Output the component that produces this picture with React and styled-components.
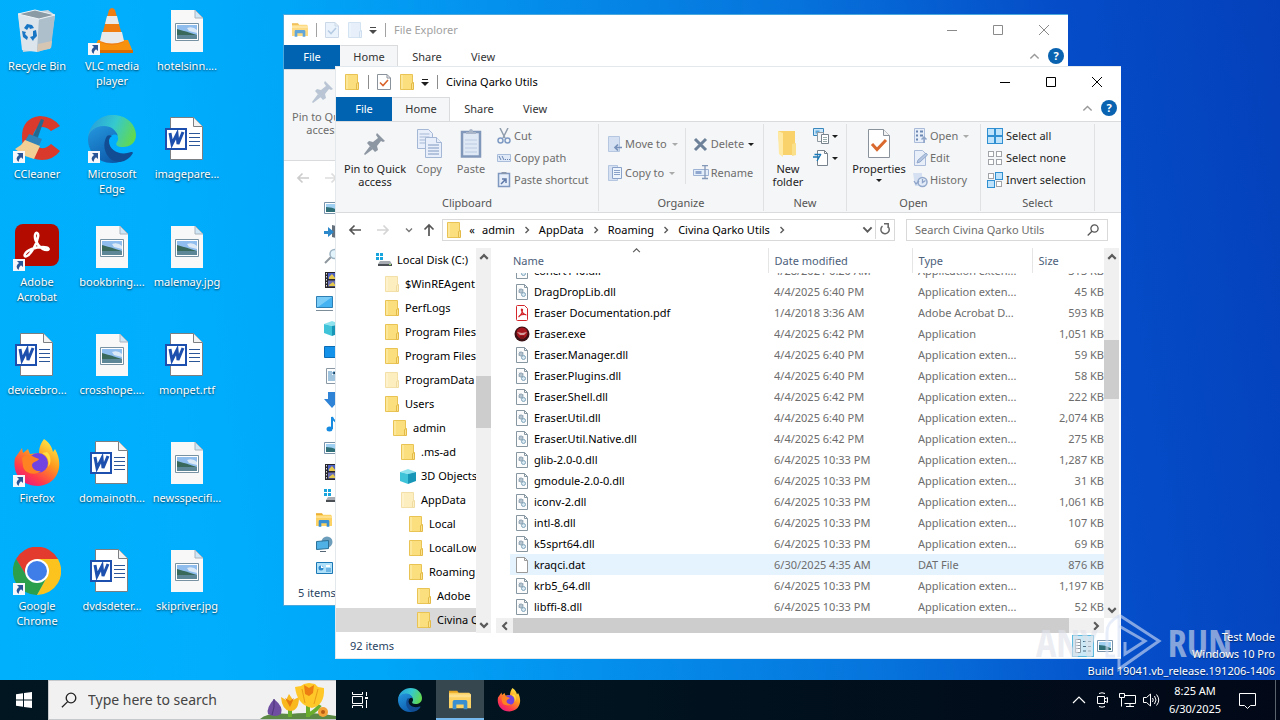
import React from "react";
import styled, { createGlobalStyle } from "styled-components";

const GlobalStyle = createGlobalStyle`
  * {
    box-sizing: border-box;
  }
  body {
    margin: 0;
    overflow: hidden;
    font-family: "Noto Sans", "Open Sans", sans-serif;
    font-size: 11px;
    line-height: 16px;
    color: #000;
  }
  button,
  input {
    font: inherit;
    color: inherit;
    margin: 0;
    padding: 0;
    border: 0;
    background: none;
  }
  svg {
    display: block;
    flex: none;
  }
`;

const Screen = styled.div`
  height: 100vh;
  display: flex;
  flex-direction: column;
`;

const Desktop = styled.main`
  position: relative;
  flex: 1;
  min-height: 0;
  overflow: hidden;
  background: linear-gradient(
    82deg,
    #00b0fc 0%,
    #00aefd 16%,
    #00a6f8 28%,
    #0492ee 42%,
    #0674dc 64%,
    #054cc8 84%,
    #0440ba 100%
  );
`;

const ShortcutGrid = styled.div`
  display: grid;
  grid-auto-flow: column;
  grid-template-rows: repeat(6, 108px);
  grid-auto-columns: 74px;
  column-gap: 1px;
`;

const Shortcut = styled.button`
  display: flex;
  flex-direction: column;
  align-items: center;
  gap: 3px;
  padding-top: 7px;
`;

const ShortcutIcon = styled.span`
  position: relative;
  width: 48px;
  height: 48px;
`;

const ShortcutArrow = styled.span`
  position: absolute;
  left: 0;
  bottom: 0;
`;

const ShortcutLabel = styled.span`
  max-width: 74px;
  line-height: 15px;
  color: #fff;
  text-shadow: 0 1px 2px rgba(0, 0, 0, 0.7);
`;

const WindowFrame = styled.section`
  position: absolute;
  inset: ${(props) => props.$inset};
  display: flex;
  flex-direction: column;
  overflow: hidden;
  background: #fff;
  border: 1px solid ${(props) => (props.$active ? "#e3e8ec" : "#4aa8dc")};
  border-right-width: 0;
`;

const TitleBar = styled.header`
  flex: none;
  height: 30px;
  display: flex;
  align-items: center;
  padding: 0 1px 0 8px;
`;

const TitleTools = styled.div`
  flex: 1;
  display: flex;
  align-items: center;
  gap: 8px;
  opacity: ${(props) => (props.$active ? 1 : 0.8)};
`;

const ToolSeparator = styled.span`
  width: 1px;
  height: 14px;
  background: #8c8c8c;
`;

const ToolButton = styled.button`
  display: grid;
  place-items: center;
  width: ${(props) => props.$width || 14}px;
  height: 22px;
  opacity: ${(props) => (props.$faded ? 0.7 : 1)};
`;

const WindowTitle = styled.span`
  font-size: 11px;
  color: ${(props) => (props.$active ? "#000" : "#8a8a8a")};
`;

const CaptionButton = styled.button`
  width: 46px;
  height: 30px;
  display: grid;
  place-items: center;
  color: ${(props) => (props.$active ? "#000" : "#8a8a8a")};
`;

const TabStrip = styled.nav`
  flex: none;
  height: 24px;
  display: flex;
`;

const Tab = styled.button`
  width: ${(props) => props.$width}px;
  height: 24px;
  padding-bottom: 2px;
  color: #333;
  border: 1px solid transparent;
  border-bottom: 0;
  ${(props) => props.$kind === "file" && "background: #0063b1; color: #fff;"}
  ${(props) =>
    props.$kind === "current" &&
    "background: #f5f6f7; border-color: #dadbdc; border-left-color: #f5f6f7;"}
`;

const TabExtras = styled.div`
  margin-left: auto;
  display: flex;
  align-items: center;
  gap: 8px;
  padding: 0 4px 2px 0;
`;

const HelpButton = styled.button`
  width: 16px;
  height: 16px;
  line-height: 16px;
  border-radius: 50%;
  background: #0a63b0;
  color: #fff;
  font-weight: bold;
`;

const Ribbon = styled.div`
  flex: none;
  height: 92px;
  display: flex;
  padding: 2px 0 1px;
  background: #f5f6f7;
  border-top: 1px solid #dadbdc;
  border-bottom: 1px solid #dadbdc;
`;

const RibbonGroup = styled.div`
  width: ${(props) => props.$width}px;
  display: flex;
  flex-direction: column;
  border-right: 1px solid #e0e1e3;
`;

const GroupItems = styled.div`
  flex: 1;
  display: flex;
  padding: 2px 4px 0 ${(props) => props.$start || 6}px;
`;

const GroupTitle = styled.div`
  text-align: center;
  line-height: 16px;
  color: #555;
`;

const BigButton = styled.button`
  display: flex;
  flex-direction: column;
  align-items: center;
  justify-content: flex-start;
  gap: 4px;
  height: 66px;
  padding-top: 3px;
  width: ${(props) => props.$width}px;
  line-height: 13px;
  color: ${(props) => (props.$off ? "#6d6d6d" : "#1e1e1e")};
`;

const BigLabel = styled.span`
  white-space: pre-line;
`;

const SmallColumn = styled.div`
  display: flex;
  flex-direction: column;
  padding-top: ${(props) => props.$top || 0}px;
  padding-left: ${(props) => props.$left || 0}px;
  gap: ${(props) => props.$gap || 6}px;
`;

const SmallButton = styled.button`
  display: flex;
  align-items: center;
  gap: ${(props) => props.$gap || 2}px;
  height: 16px;
  white-space: nowrap;
  color: ${(props) => (props.$off ? "#6d6d6d" : "#1e1e1e")};
`;

const DropSpot = styled.span`
  padding-left: ${(props) => props.$space || 0}px;
`;

const InnerDivider = styled.span`
  width: 1px;
  height: 56px;
  margin: 2px 7px 0;
  background: #e0e1e3;
`;

const NavRow = styled.div`
  flex: none;
  height: 35px;
  display: flex;
  align-items: center;
  padding: 0 13px 2px 11px;
`;

const NavButton = styled.button`
  width: ${(props) => props.$width}px;
  height: 22px;
  display: grid;
  place-items: center;
`;

const AddressBox = styled.div`
  flex: 1;
  min-width: 0;
  height: 22px;
  display: flex;
  align-items: center;
  border: 1px solid #d9d9d9;
  padding-left: 3px;
`;

const Crumb = styled.button`
  display: flex;
  align-items: center;
  height: 20px;
`;

const CrumbArrow = styled.span`
  width: ${(props) => props.$width || 24}px;
  display: grid;
  place-items: center;
`;

const AddressEnd = styled.div`
  margin-left: auto;
  display: flex;
`;

const RefreshButton = styled(NavButton)`
  height: 20px;
  border-left: 1px solid #d9d9d9;
`;

const SearchField = styled.label`
  width: 202px;
  height: 22px;
  display: flex;
  align-items: center;
  margin-left: 11px;
  padding: 0 8px;
  border: 1px solid #d9d9d9;

  input {
    flex: 1;
    min-width: 0;
    outline: none;
  }
  input::placeholder {
    color: #6d6d6d;
    opacity: 1;
  }
`;

const Panes = styled.div`
  flex: 1;
  min-height: 0;
  display: flex;
`;

const Tree = styled.ul`
  flex: none;
  width: 140px;
  margin: 0;
  padding: 0;
  list-style: none;
  overflow: hidden;
`;

const TreeItem = styled.li`
  height: 24px;
  display: flex;
  align-items: center;
  gap: 5px;
  padding-left: ${(props) => props.$depth * 8 + props.$base}px;
  white-space: nowrap;
  background: ${(props) => (props.$selected ? "#d9d9d9" : "transparent")};
`;

const Scroller = styled.div`
  flex: none;
  display: flex;
  flex-direction: ${(props) => (props.$across ? "row" : "column")};
  ${(props) => (props.$across ? "height: 15px; margin-right: 15px;" : "width: 15px;")}
  background: #f0f0f0;
`;

const ScrollArrow = styled.button`
  flex: none;
  width: ${(props) => (props.$across ? 17 : 15)}px;
  height: ${(props) => (props.$across ? 15 : 17)}px;
  display: grid;
  place-items: center;
`;

const ScrollSpace = styled.span`
  flex: ${(props) => props.$share} 1 0;
`;

const ScrollThumb = styled(ScrollSpace)`
  background: #cdcdcd;
`;

const ListPane = styled.div`
  flex: 1;
  min-width: 0;
  display: flex;
  flex-direction: column;
  margin: 0 2px 0 5px;
`;

const ListArea = styled.div`
  flex: 1;
  min-height: 0;
  display: flex;
`;

const TableView = styled.div`
  flex: 1;
  min-width: 0;
  overflow: hidden;
  padding-left: 14px;
`;

const FileTable = styled.table`
  width: 100%;
  table-layout: fixed;
  border-collapse: collapse;
`;

const HeadCell = styled.th`
  position: relative;
  width: ${(props) => (props.$width ? `${props.$width}px` : "auto")};
  height: 25px;
  padding: 0 0 0 ${(props) => props.$pad}px;
  border-right: ${(props) => (props.$last ? "0" : "1px solid #e5e5e5")};
  text-align: left;
  font-weight: normal;
  color: #4c607a;
`;

const SortMark = styled.span`
  position: absolute;
  top: -2px;
  left: 50%;
  margin-left: -7px;
`;

const FileRow = styled.tr`
  background: ${(props) => (props.$hover ? "#e5f3ff" : "transparent")};
`;

const Cell = styled.td`
  padding: 0 0 0 ${(props) => (props.$main ? 4 : 6)}px;
  color: ${(props) => (props.$main ? "#000" : "#6d6d6d")};
  white-space: nowrap;
`;

const CellBody = styled.div`
  display: flex;
  align-items: ${(props) => (props.$clipped ? "flex-end" : "center")};
  justify-content: ${(props) => (props.$right ? "flex-end" : "flex-start")};
  gap: 4px;
  height: ${(props) => (props.$clipped ? 8 : 21)}px;
  padding-bottom: ${(props) => (props.$clipped ? 2 : 0)}px;
  overflow: hidden;
`;

const StatusBar = styled.footer`
  flex: none;
  height: 25px;
  display: flex;
  align-items: center;
  padding: 1px 5px 0 14px;
  color: #28435f;
`;

const ViewButton = styled.button`
  width: 22px;
  height: 22px;
  display: grid;
  place-items: center;
  border: 1px solid ${(props) => (props.$on ? "#5cb8dc" : "transparent")};
  background: ${(props) => (props.$on ? "#cbe8f6" : "transparent")};
`;

const StatusText = styled.span`
  flex: 1;
`;

const Watermark = styled.div`
  position: absolute;
  right: 48px;
  bottom: 8px;
  display: flex;
  align-items: center;
  gap: 6px;
  font-family: "Liberation Sans Narrow", "Open Sans Condensed", "Roboto Condensed", Roboto, sans-serif;
  font-size: 38px;
  line-height: 60px;
  color: rgba(222, 226, 234, 0.6);
  pointer-events: none;
`;

const BuildInfo = styled.div`
  position: absolute;
  right: 5px;
  bottom: 1px;
  text-align: right;
  line-height: 17px;
  color: #fff;
  text-shadow: 0 1px 1px rgba(0, 0, 0, 0.5);
`;

const Taskbar = styled.footer`
  flex: none;
  height: 40px;
  display: flex;
  background: linear-gradient(90deg, #011620, #01131f 50%, #020817);
  color: #fff;
`;

const TaskButton = styled.button`
  width: ${(props) => props.$width || 48}px;
  height: 40px;
  display: grid;
  place-items: center;
  ${(props) =>
    props.$open && "background: #37474f; border-bottom: 2px solid #76b9ed; padding-top: 2px;"}
`;

const TaskSearch = styled.label`
  width: 288px;
  height: 40px;
  display: flex;
  align-items: center;
  padding-left: 12px;
  background: #f1f1f1;
  border: 1px solid #c5c9cc;
  border-right: 0;

  input {
    flex: 1;
    min-width: 0;
    margin-left: 11px;
    padding-bottom: 1px;
    font-size: 14px;
    line-height: 20px;
    outline: none;
  }
  input::placeholder {
    color: #444;
    opacity: 1;
  }
`;

const Tray = styled.div`
  margin-left: auto;
  display: flex;
  align-items: center;
`;

const Clock = styled.button`
  width: 64px;
  text-align: center;
  line-height: 18px;
`;

const PeekButton = styled.button`
  width: 5px;
  height: 40px;
  margin-left: 8px;
  border-left: 1px solid #5b636d;
`;

/* small drawings */

const Chevron = ({ dir = "down", size = 8, color = "#5a5a5a", weight = 1.4 }) => {
  const turns = { down: 0, left: 90, up: 180, right: 270 };
  return (
    <svg width={size} height={size} viewBox="0 0 8 8">
      <path
        d="M1 2.500l3 3 3-3"
        fill="none"
        stroke={color}
        strokeWidth={weight}
        transform={`rotate(${turns[dir]} 4 4)`}
      />
    </svg>
  );
};

const DropMark = ({ color = "#1e1e1e", space }) => (
  <DropSpot $space={space}>
    <svg width="6" height="3" viewBox="0 0 6 3">
      <path d="M0 0h6L3 3z" fill={color} />
    </svg>
  </DropSpot>
);

const ToolbarMark = () => (
  <svg width="8" height="8" viewBox="0 0 8 8">
    <path d="M1 1h6v1H1zM0 4h8L4 8z" fill="#1e1e1e" />
  </svg>
);

const Folder = ({ pale, blue }) => (
  <svg width="16" height="16" viewBox="0 0 16 16" opacity={pale ? 0.5 : 1}>
    <path d="M1.500.5h12v15h-12z" fill={blue ? "#d3e5f8" : "#fbdf7f"} stroke={blue ? "#b4cfe9" : "#e9c354"} />
    <path d="M12.500 9.500l2-1v7h-2z" fill={blue ? "#dbeafa" : "#fbe28c"} stroke={blue ? "#a9c6e3" : "#e3ba48"} />
    <path d="M3 1v14" stroke={blue ? "#e9f3fd" : "#fdeeb4"} />
  </svg>
);

const BigFolder = () => (
  <svg width="22" height="29" viewBox="0 0 22 29">
    <path d="M1 2h17v24H3z" fill="#f9d26b" />
    <path d="M1 2l5 2v24l-4-3z" fill="#ffe9a3" />
    <path d="M15 15l4-1v12l-4 1z" fill="#fbe08c" />
  </svg>
);

const ExplorerIcon = ({ size = 16 }) => (
  <svg width={size} height={size} viewBox="0 0 24 24">
    <path d="M0 2h9l2 3H0z" fill="#e8a723" />
    <path d="M0 4h22l2 2v15H0z" fill="#fdd264" />
    <path d="M0 6h24v3H0z" fill="#fee08c" />
    <path d="M4 22v-8q0-2 2-2h12q2 0 2 2v8h-4v-5H8v5z" fill="#3a8fd0" />
  </svg>
);

const CheckPage = ({ blue }) => (
  <svg width="14" height="16" viewBox="0 0 14 16">
    <path d="M.5.5h9.500l3.500 3.500v11.500H.5z" fill={blue ? "#dceafa" : "#fff"} stroke={blue ? "#a3bcd8" : "#8a929b"} />
    <path d="M10 .5V4h3.500" fill="none" stroke={blue ? "#a3bcd8" : "#8a929b"} />
    <path d="M3 8.500l3 3 5-5.500" fill="none" stroke={blue ? "#7ea6cf" : "#d9622b"} strokeWidth="1.600" />
  </svg>
);

const PropertiesIcon = () => (
  <svg width="22" height="29" viewBox="0 0 22 29">
    <path d="M.5.5h15l6 6v22H.5z" fill="#fff" stroke="#8a929b" />
    <path d="M15.500.5v6h6" fill="#f2f2f2" stroke="#8a929b" />
    <path d="M4 15l5 5.500L18 11" fill="none" stroke="#d9692e" strokeWidth="3" />
  </svg>
);

const PinIcon = ({ faded }) => (
  <svg width="26" height="29" viewBox="0 0 26 29">
    <g fill={faded ? "#b9c5d4" : "#8d97a3"}>
      <path d="M15 4l8 8-2 1-2-1-4 5 1 4-3 2-8-9 2-2 4 1 5-4-2-3z" />
      <path d="M8 17l3 3-8 6-1-1z" />
    </g>
  </svg>
);

const CopyIcon = () => (
  <svg width="26" height="29" viewBox="0 0 26 29">
    <g stroke="#a4b7d5" fill="#e8effa">
      <path d="M1.500.5h11l4 4v15h-15z" />
      <path d="M3.500 5h10M3.500 8h10M3.500 11h10M3.500 14h10" />
      <path d="M9.500 8.500h11l5 5v15h-16z" />
      <path d="M20.500 8.500v5h5" />
      <path d="M12 16h11M12 19h11M12 22h11M12 25h11" stroke="#7f98bf" />
    </g>
  </svg>
);

const PasteIcon = () => (
  <svg width="22" height="29" viewBox="0 0 22 29">
    <path d="M2 3h18v24.500H2z" fill="#dfe8f5" stroke="#8298bb" strokeWidth="2.500" />
    <path d="M6 5V3h3q0-3 2-3t2 3h3v2z" fill="#a9b6c9" />
    <path d="M5 11h12M5 15h12M5 19h12M5 23h12" stroke="#bccbe2" />
  </svg>
);

const CutIcon = () => (
  <svg width="16" height="16" viewBox="0 0 16 16" fill="none">
    <path d="M4 0l5 10M12 0L7 10" stroke="#8f9dae" strokeWidth="1.500" />
    <circle cx="4.500" cy="12.500" r="2.500" stroke="#7f9bc4" strokeWidth="1.500" />
    <circle cx="11.500" cy="12.500" r="2.500" stroke="#7f9bc4" strokeWidth="1.500" />
  </svg>
);

const CopyPathIcon = () => (
  <svg width="16" height="16" viewBox="0 0 16 16">
    <path d="M1.500 4.500h13v7h-13z" fill="#dfe9f8" stroke="#a9bddb" />
    <path d="M3 6l2 4M6 6l2 4M9 9.500h1M11 9.500h1M13 9.500h1" stroke="#6681b0" />
  </svg>
);

const PasteLinkIcon = () => (
  <svg width="16" height="16" viewBox="0 0 16 16">
    <path d="M2.500 1.500h11v13h-11z" fill="#e6eefa" stroke="#7f98bf" strokeWidth="1.500" />
    <path d="M5.500 0h5v2h-5z" fill="#8a98ad" />
    <path d="M5 12l4-4M6 7h4v4" fill="none" stroke="#5c77a6" strokeWidth="1.500" />
  </svg>
);

const MoveToIcon = () => (
  <svg width="15" height="16" viewBox="0 0 15 16">
    <path d="M.5.5h11v15H.5z" fill="#d5e1f2" stroke="#b5c6e0" />
    <path d="M14 11.500H7M10 8.500l-3 3 3 3" fill="none" stroke="#7891ba" strokeWidth="1.700" />
  </svg>
);

const CopyToIcon = () => (
  <svg width="15" height="16" viewBox="0 0 15 16">
    <path d="M.5.5h9v15h-9z" fill="#d5e1f2" stroke="#b5c6e0" />
    <path d="M4.500 2.500h9v11h-9z" fill="#eef4fc" stroke="#8ba2c8" />
    <path d="M6 5.500h6M6 7.500h6M6 9.500h6" stroke="#8ba2c8" />
  </svg>
);

const DeleteIcon = () => (
  <svg width="15" height="15" viewBox="0 0 15 15">
    <path d="M2 2l11 11M13 2L2 13" stroke="#6d8199" strokeWidth="3" />
  </svg>
);

const RenameIcon = () => (
  <svg width="17" height="16" viewBox="0 0 17 16">
    <path d="M.5 4.500h15v6H.5z" fill="#e4edfa" stroke="#9eb3d4" />
    <path d="M2.500 6h6v3h-6z" fill="#8fa7ce" />
    <path d="M9 .5h6M12 .5v13M9 13.500h6" stroke="#8498b8" strokeWidth="1.300" />
  </svg>
);

const NewItemIcon = () => (
  <svg width="17" height="16" viewBox="0 0 17 16">
    <path d="M.5.5h10v7H.5z" fill="#cbe6f8" stroke="#3a87bd" />
    <path d="M2.500 2.500h4v3h-4z" fill="#5aa7d8" />
    <path d="M4.500 4.500h6v9h-6z" fill="#f7f7f7" stroke="#8f979f" />
    <path d="M8.500 6.500h7v9h-7z" fill="#fff" stroke="#78828c" />
    <path d="M10 9.500h4M10 11.500h4M10 13.500h4" stroke="#9aa" />
  </svg>
);

const EasyAccessIcon = () => (
  <svg width="17" height="16" viewBox="0 0 17 16">
    <path d="M4.500.5h7l3 3v12h-10z" fill="#fff" stroke="#78828c" />
    <path d="M11.500.5v3h3" fill="none" stroke="#78828c" />
    <path d="M0 7h6M1.500 4.500H8M4 11l4-7" stroke="#1979b8" strokeWidth="1.300" />
  </svg>
);

const OpenIcon = () => (
  <svg width="15" height="16" viewBox="0 0 15 16">
    <path d="M1.500.5h10v14h-10z" fill="#e8eff9" stroke="#a9bbd8" />
    <path d="M3 3.500h2M3 7.500h2M3 11.500h2M7 3.500h3M7 7.500h3" stroke="#6d87b3" strokeWidth="2" />
    <path d="M11 15V9M8.500 11.500L11 9l2.500 2.500" fill="none" stroke="#8da3c8" strokeWidth="1.500" />
  </svg>
);

const EditIcon = () => (
  <svg width="15" height="16" viewBox="0 0 15 16">
    <path d="M1.500.5h8l3 3v12h-11z" fill="#e8eff9" stroke="#a9bbd8" />
    <path d="M4 13l1-3 8-7 1.500 2-7.500 7z" fill="#b3c5e0" stroke="#93a9cb" />
  </svg>
);

const HistoryIcon = () => (
  <svg width="15" height="16" viewBox="1 0 15 16">
    <path d="M1 1h9v13H3z" fill="#d5e1f2" />
    <circle cx="10.500" cy="10" r="4.500" fill="#e2ebf7" stroke="#93a9cb" strokeWidth="1.500" />
    <path d="M10.500 7v3.500l3-2M2 9l2 3 3-3" fill="none" stroke="#8da3c8" strokeWidth="1.300" />
  </svg>
);

const SelectIcon = ({ filled }) => (
  <svg width="16" height="16" viewBox="0 0 16 16">
    {[
      [1, 1],
      [9, 1],
      [1, 9],
      [9, 9],
    ].map(([x, y], idx) =>
      filled.includes(idx) ? (
        <rect key={idx} x={x - 0.5} y={y - 0.5} width="7" height="7" fill="#bfe3fa" stroke="#2f8fd0" />
      ) : (
        <rect key={idx} x={x + 0.5} y={y + 0.5} width="5" height="5" fill="#fff" stroke="#a0a4a8" />
      )
    )}
  </svg>
);

const NavArrow = ({ dir, color }) => {
  const turns = { left: 0, up: 90, right: 180 };
  return (
    <svg width="14" height="14" viewBox="0 0 14 14">
      <path
        d="M13 7H2M6.500 2.500L2 7l4.500 4.500"
        fill="none"
        stroke={color}
        strokeWidth="1.700"
        transform={`rotate(${turns[dir]} 7 7)`}
      />
    </svg>
  );
};

const RefreshIcon = () => (
  <svg width="12" height="12" viewBox="0 0 12 12">
    <path d="M9 3.500A4.200 4.200 0 1 1 3.500 3.200" fill="none" stroke="#666" strokeWidth="1.500" />
    <path d="M5 .8h4.200V5" fill="none" stroke="#666" strokeWidth="1.500" />
  </svg>
);

const SearchIcon = ({ size = 12, color = "#555", weight = 1.3 }) => (
  <svg width={size} height={size} viewBox="0 0 12 12" fill="none" stroke={color} strokeWidth={weight}>
    <circle cx="7.500" cy="4.500" r="3.600" />
    <path d="M5 7.200L.7 11.500" />
  </svg>
);

const DriveIcon = () => (
  <svg width="16" height="16" viewBox="0 0 16 16">
    <path d="M0 1h3v3H0zM4 1h3v3H4zM0 5h3v3H0zM4 5h3v3H4z" fill="#18a4dc" />
    <path d="M4 9h10l2 3H2z" fill="#a7adb2" />
    <path d="M2 12h14v2H2z" fill="#4a4f55" />
    <path d="M13 12h2v1h-2z" fill="#9fe870" />
  </svg>
);

const CubeIcon = () => (
  <svg width="16" height="16" viewBox="0 0 16 16">
    <path d="M0 4l8-3 8 3-8 2z" fill="#8fe3ee" />
    <path d="M0 4l8 2v10l-8-3z" fill="#3fc3d8" />
    <path d="M16 4L8 6v10l8-3z" fill="#1796b8" />
  </svg>
);

const PictureIcon = () => (
  <svg width="16" height="16" viewBox="0 0 16 16">
    <path d="M.5 2.500h15v11H.5z" fill="#fff" stroke="#7893aa" />
    <path d="M2 4h12v5H2z" fill="#9fd0f2" />
    <path d="M2 7q6 0 12 3v2H2z" fill="#2f6f78" />
  </svg>
);

const FilmIcon = () => (
  <svg width="16" height="16" viewBox="0 0 16 16">
    <path d="M1 0h14v16H1z" fill="#26262c" />
    <path d="M2.500 1v14M13.500 1v14" stroke="#ddd" strokeDasharray="1.500 1.500" />
    <path d="M4 1h8v6H4z" fill="#4b5fc4" />
    <path d="M4 8.500h8v6H4z" fill="#6b6fb4" />
    <path d="M5 5l3-3 4 5H5zM5 13l4-3 3 4H5z" fill="#e5c94f" />
  </svg>
);

const MonitorIcon = () => (
  <svg width="17" height="16" viewBox="0 0 17 16">
    <path d="M.5.5h16v11H.5z" fill="#45b2f2" stroke="#2d7fb4" />
    <path d="M1 1h15L2 11H1z" fill="#7bcdf8" />
    <path d="M0 14.500h17" stroke="#7c8c99" />
  </svg>
);

const DesktopIcon = () => (
  <svg width="16" height="16" viewBox="0 0 16 16">
    <path d="M.5 2.500h15v11H.5z" fill="#1492ea" stroke="#0b6cb5" />
  </svg>
);

const DocumentIcon = () => (
  <svg width="16" height="16" viewBox="0 0 16 16">
    <path d="M2.500.5h11v15h-11z" fill="#fff" stroke="#8a98a5" />
    <path d="M4 4h4M4 6h4M4 8h8M4 10h8M4 12h8M9 4h3v2H9z" stroke="#4288bd" />
  </svg>
);

const DownloadIcon = () => (
  <svg width="16" height="16" viewBox="0 0 16 16">
    <path d="M4 0h7v7h5l-8 9-8-9h4z" fill="#2f83d6" />
  </svg>
);

const MusicIcon = () => (
  <svg width="16" height="16" viewBox="0 0 16 16">
    <ellipse cx="5.500" cy="13" rx="3" ry="2.500" fill="#178be0" />
    <path d="M8 13V1q1 3 4 5" fill="none" stroke="#178be0" strokeWidth="2" />
  </svg>
);

const MagnifierIcon = () => (
  <svg width="16" height="16" viewBox="0 0 16 16">
    <path d="M1 15l6-6" stroke="#8d969e" strokeWidth="2" />
    <circle cx="10.500" cy="6" r="4.500" fill="#e2f3fc" stroke="#9db4c4" strokeWidth="1.500" />
  </svg>
);

const DeviceIcon = () => (
  <svg width="16" height="16" viewBox="0 0 16 16">
    <path d="M8 1l8 2v12l-8-2z" fill="#64717c" />
    <path d="M0 7h4V3l6 5-6 5v-3H0z" fill="#2d88ca" />
  </svg>
);

const NetworkIcon = () => (
  <svg width="17" height="16" viewBox="0 0 17 16">
    <circle cx="11" cy="6" r="5.500" fill="#6c9dba" />
    <path d="M.5 5.500l12-1v8l-12 1z" fill="#4fb1e6" stroke="#2b7198" />
    <path d="M4 15.500h6" stroke="#567" />
  </svg>
);

const PanelIcon = () => (
  <svg width="17" height="16" viewBox="0 0 17 16">
    <path d="M.5 2.500h16v11H.5z" fill="#aee0fa" stroke="#1c77b5" />
    <circle cx="5" cy="8" r="2.500" fill="#2f8bcf" />
    <path d="M5 8V5l3 3zM10 5h4v2h-4z" fill="#fff" />
    <path d="M10 9h5M10 11h5" stroke="#2f8bcf" />
  </svg>
);

const DllIcon = () => (
  <svg width="16" height="16" viewBox="0 0 16 16">
    <path d="M2.500.5h8l3 3v12h-11z" fill="#fcfcfc" stroke="#8797a2" />
    <path d="M10.500.5v3h3" fill="none" stroke="#8797a2" />
    <circle cx="7" cy="7" r="2" fill="#e3edf2" stroke="#8097a8" />
    <circle cx="9.500" cy="10.500" r="2" fill="#dcebf3" stroke="#7fa5bb" />
    <path d="M5 4.500l4 5M4.500 8.500l5-3" stroke="#8097a8" strokeWidth="0.500" />
  </svg>
);

const BlankIcon = () => (
  <svg width="16" height="16" viewBox="0 0 16 16">
    <path d="M2.500.5h8l3 3v12h-11z" fill="#fff" stroke="#9a9a9a" />
    <path d="M10.500.5v3h3" fill="none" stroke="#9a9a9a" />
  </svg>
);

const PdfIcon = () => (
  <svg width="16" height="16" viewBox="0 0 16 16">
    <path d="M3.500.5h7l3 3v11q0 1-1 1h-9q-1 0-1-1v-13q0-1 1-1z" fill="#fff" stroke="#d4272b" />
    <path
      d="M4.500 12q4-3 4-7.500q-1.500-1-1 1 1.500 4 5 4.500M5 11q3-2 7-1.500"
      fill="none"
      stroke="#d4272b"
      strokeWidth="1.200"
    />
  </svg>
);

const EraserIcon = () => (
  <svg width="16" height="16" viewBox="0 0 16 16">
    <circle cx="8" cy="8" r="7.500" fill="#3c1115" />
    <circle cx="8" cy="7" r="5.500" fill="#a3161d" />
    <path d="M3 6l5 1 5-1-3 3H6z" fill="#d39a9a" />
    <path d="M6 10h4v3H6z" fill="#7b1217" />
  </svg>
);

const DetailsViewIcon = () => (
  <svg width="18" height="14" viewBox="0 0 18 14">
    <path d="M1.500.5h5v13h-5z" fill="#fff" stroke="#8c9aa5" />
    <path d="M1 3.500h6M1 6.500h6M1 9.500h6" stroke="#8c9aa5" />
    <path d="M9 2.500h3M14 2.500h3M9 7.500h3M14 7.500h3M9 12h3M14 12h3" stroke="#4d6b80" />
  </svg>
);

const ArrowBadge = () => (
  <svg width="12" height="12" viewBox="0 0 12 12">
    <path d="M0 0h12v12H0z" fill="#f5f7fa" />
    <path d="M4 2h6v6L8 6.300Q5.500 8 5.500 11 1.500 7.500 6 4z" fill="#2a5596" />
  </svg>
);

const RecycleBin = () => (
  <svg width="48" height="48" viewBox="0 0 48 48">
    <path d="M5 7l30-4 7 5-5 34-27 3z" fill="#c6d3dd" />
    <path d="M5 7l21 5-2 33-15-2z" fill="#dce5ec" />
    <path d="M26 12l16-4-4 33-14 4z" fill="#aebfcc" />
    <path d="M5 7l17-4 20 5-16 4z" fill="#8b9ba6" stroke="#eef4f8" />
    <path d="M24 45l1-8 14-3-1 7z" fill="#d5c6b4" />
    <g fill="#1976c5">
      <path d="M11 21l3-4 5 1 2 3-4 1-1-2-2 3z" />
      <path d="M20 24l3-1 1 6-3 3-1 2-3-4 3-1z" />
      <path d="M9 24l4 1-1 2 3 3-1 3-4-3z" />
    </g>
  </svg>
);

const VlcCone = () => (
  <svg width="48" height="48" viewBox="0 0 48 48">
    <path d="M10 33h30l5 12H4z" fill="#f8920e" />
    <path d="M4 43h41v3H4z" fill="#d96b00" />
    <path d="M21 3q3-4 6 0l9 32q-12 6-24 0z" fill="#f07d10" />
    <path d="M19 9h10l2 8H17zM14 25h20l2 9q-12 5-24 0z" fill="#e7e9ea" />
  </svg>
);

const CCleanerIcon = () => (
  <svg width="48" height="48" viewBox="0 0 48 48">
    <path
      d="M47 11Q39 1 27 1 9 3 9 22q0 22 20 23 11 0 18-9l-9-7q-5 5-10 4-8-2-8-11 1-10 9-10 5 0 9 4z"
      fill="#d93a2b"
    />
    <path d="M28 4l3 1-7 20-5-2z" fill="#27688f" />
    <path d="M16 19l13 5-3 7-14-5z" fill="#2f83b8" />
    <path d="M12 25l15 6-6 13-9-3-10-7 6-4z" fill="#f2cf94" />
  </svg>
);

const EdgeIcon = ({ size = 48 }) => (
  <svg width={size} height={size} viewBox="0 0 48 48">
    <defs>
      <linearGradient id="edgeTop" x1="0" y1="0.3" x2="1" y2="0.6">
        <stop offset="0" stopColor="#289edb" />
        <stop offset="0.500" stopColor="#35c9cf" />
        <stop offset="1" stopColor="#63d94c" />
      </linearGradient>
      <linearGradient id="edgeSide" x1="0" y1="0" x2="0.6" y2="1">
        <stop offset="0" stopColor="#2598df" />
        <stop offset="1" stopColor="#0d5bab" />
      </linearGradient>
    </defs>
    <path
      d="M0 22C2 8 13 0 25 0c14 0 23 10 23 20 0 8-6 12-13 12-6 0-8-2-6-5 2-3 1-5 0-7-3-5-7-8-13-8C9 12 3 16 0 22z"
      fill="url(#edgeTop)"
    />
    <path
      d="M0 24c0-7 7-13 16-13 7 0 12 4 14 10-2-2-5-2-7 0-5 5-4 14 1 19 5 5 11 4 15 3-4 3-9 5-15 5C9 48 0 36 0 24z"
      fill="url(#edgeSide)"
    />
    <path
      d="M19 21c-7 11 1 27 13 26 6-1 10-4 13-9 0-1-1-1-2-1-10 4-22-1-22-11 0-2 1-4 3-5-2-1-4-1-5 0z"
      fill="#124d94"
    />
  </svg>
);

const AcrobatIcon = () => (
  <svg width="48" height="48" viewBox="0 0 48 48">
    <rect x="2" y="1" width="44" height="42" rx="8" fill="#b30b00" />
    <path
      d="M12 31c2-4 10-7 18-7 6 0 7 3 4 3-6 0-13-8-12-15 1-4 4-2 3 2-1 7-7 17-11 19-2 1-3 0-2-2z"
      fill="none"
      stroke="#fff"
      strokeWidth="2.500"
    />
  </svg>
);

const FirefoxIcon = ({ size = 48 }) => (
  <svg width={size} height={size} viewBox="0 0 48 48">
    <defs>
      <linearGradient id="foxFire" x1="0.85" y1="0" x2="0.2" y2="1">
        <stop offset="0" stopColor="#fff14a" />
        <stop offset="0.400" stopColor="#ff9a1f" />
        <stop offset="0.750" stopColor="#ff3b4b" />
        <stop offset="1" stopColor="#e31587" />
      </linearGradient>
    </defs>
    <path
      d="M31 0c7 5 8 9 9 13l2-3c9 15 4 36-17 37C9 47-1 35 2 19L9 9l1 5 5-4 2 5 9-1c0-6 2-10 5-14z"
      fill="url(#foxFire)"
    />
    <circle cx="25" cy="24" r="10" fill="#7143e0" />
    <path d="M9 19c4-4 9-3 12-1l5 2c-2 3-6 2-7 6 0 4 5 7 9 6-5 5-17 3-18-5z" fill="#ff8222" />
    <path d="M29 14c5 2 8 8 6 14 4-4 3-12-1-15z" fill="#fd4" />
  </svg>
);

const ChromeIcon = () => (
  <svg width="48" height="48" viewBox="0 0 48 48">
    <path d="M3 12A24 24 0 0 1 45 12H24L14 30z" fill="#e33b2e" />
    <path d="M3 12A24 24 0 0 0 24 48L34 30H14z" fill="#2b9f4b" />
    <path d="M45 12A24 24 0 0 1 24 48L34 30 24 12z" fill="#fcc31e" />
    <circle cx="24" cy="24" r="12" fill="#fff" />
    <circle cx="24" cy="24" r="10" fill="#3f7de8" />
  </svg>
);

const WordFile = () => (
  <svg width="48" height="48" viewBox="0 0 48 48">
    <path d="M7.500 2.500h23l9 9v33h-32z" fill="#fff" stroke="#7c7f82" />
    <path d="M30.500 2.500v9h9" fill="#f2f2f2" stroke="#7c7f82" />
    <path d="M26 18.500h11M26 22.500h11M26 26.500h11M26 30.500h11" stroke="#2b579a" />
    <path d="M3 14h20v20H3z" fill="#fff" stroke="#1d4fae" strokeWidth="2" />
    <path d="M7 18l2 11 5-10 1 10 5-12" fill="none" stroke="#1d4fae" strokeWidth="3" />
  </svg>
);

const ImageFile = () => (
  <svg width="48" height="48" viewBox="0 0 48 48">
    <path d="M8 3h24l8 8v34H8z" fill="#f8f8f8" />
    <path d="M32 3v8h8z" fill="#cfe6f6" stroke="#a8b4bd" />
    <path d="M12.500 16.500h23v17h-23z" fill="#fff" stroke="#7793a3" />
    <path d="M14 18h20v14H14z" fill="#8fbdee" />
    <path d="M14 22q8 2 20 6v1H14z" fill="#39695a" />
    <path d="M14 28h20v4H14z" fill="#5d8797" />
    <path d="M24 21q6-2 10 2v3l-8-2z" fill="#dbe9f7" />
  </svg>
);

const TulipPicture = () => (
  <svg width="78" height="38" viewBox="0 0 78 38">
    <path d="M2 38q8-7 30-5 20-3 46 2v3z" fill="#5c8a45" />
    <path d="M32 36V24M50 36V20M50 34q8-4 12-10" stroke="#6bae2e" strokeWidth="4" fill="none" />
    <path d="M16 18q10 8 7 15-6 4-13 0-2-6 6-15z" fill="#6f4da0" />
    <path d="M16 18q1 8-2 16" stroke="#4d3479" fill="none" />
    <path d="M23 16l5 3 3-6 4 6 6-3q0 14-9 14-8-1-9-14z" fill="#f9b81d" />
    <path d="M27 17l5 3 4-3-4 9z" fill="#e67a12" />
    <path d="M37 6l6-1 3-2 5-1 6 1 3 3 6 1q1 17-12 20-15-3-17-21z" fill="#ffc728" />
    <path d="M46 4l5 3 5-3-1 8-4 3-4-2z" fill="#ec7e12" />
    <path d="M44 8l3 14M60 8l-4 15" stroke="#e99a17" fill="none" />
    <circle cx="65" cy="31" r="5" fill="#f4a338" />
    <circle cx="65" cy="31" r="2" fill="#b85c15" />
  </svg>
);

const StartIcon = () => (
  <svg width="16" height="16" viewBox="0 0 16 16">
    <path d="M0 2.200L7 1.200V7.500H0zM8 1l8-1v7.500H8zM0 8.500h7v6.300l-7-1zM8 8.500h8V16l-8-1z" fill="#fff" />
  </svg>
);

const TaskViewIcon = () => (
  <svg width="16" height="16" viewBox="0 0 16 16" fill="none" stroke="#fff">
    <path d="M.5 4.500h10v7H.5zM.5 0v2.500h10V0M.5 16v-2.500h10V16M14.500 0v4M14.500 8v8" />
    <path d="M13 5h3v2h-3z" fill="#fff" stroke="none" />
  </svg>
);

const CameraTrayIcon = () => (
  <svg width="14" height="16" viewBox="0 0 14 16" fill="none" stroke="#fff">
    <path d="M1.500 4.500h7v7h-7zM8.500 7l3-1.500v5L8.500 9M3 1.500q3-1.500 6 0M3 14.500q3 1.500 6 0" />
  </svg>
);

const WiredTrayIcon = () => (
  <svg width="17" height="16" viewBox="0 0 17 16" fill="none" stroke="#fff">
    <path d="M5.500 3.500h11v8h-11M11 11.500v3M7 14.500h8M.5 1.500h5v4h-5zM2.500 5.500v9" />
  </svg>
);

const SoundTrayIcon = () => (
  <svg width="17" height="16" viewBox="0 0 17 16" fill="none" stroke="#fff">
    <path d="M.5 5.500h3l4-3.500v12l-4-3.500h-3zM9.500 6q1.500 2 0 4M11.500 4q3 4 0 8M13.500 2.500q4.500 5.500 0 11" />
  </svg>
);

const NoteTrayIcon = () => (
  <svg width="17" height="17" viewBox="0 0 17 17" fill="none" stroke="#fff">
    <path d="M.5 1.500h16v12h-5l-3 3-3-3h-5z" />
  </svg>
);

const PlayMark = () => (
  <svg width="58" height="60" viewBox="0 0 58 60" fill="none" stroke="rgba(215,225,245,0.6)">
    <path d="M15 3l40 26-40 28V46M15 3v42" strokeWidth="3" />
    <path d="M15 14l26 15-20 13V30" strokeWidth="3" />
    <path d="M15 4Q3 10 3 20v24h8" strokeWidth="3" />
  </svg>
);

/* data */

const shortcuts = [
  { label: "Recycle Bin", icon: <RecycleBin /> },
  { label: "CCleaner", icon: <CCleanerIcon />, link: true },
  { label: "Adobe Acrobat", icon: <AcrobatIcon />, link: true },
  { label: "devicebro...", icon: <WordFile /> },
  { label: "Firefox", icon: <FirefoxIcon />, link: true },
  { label: "Google Chrome", icon: <ChromeIcon />, link: true },
  { label: "VLC media player", icon: <VlcCone />, link: true },
  { label: "Microsoft Edge", icon: <EdgeIcon />, link: true },
  { label: "bookbring....", icon: <ImageFile /> },
  { label: "crosshope....", icon: <ImageFile /> },
  { label: "domainoth...", icon: <WordFile /> },
  { label: "dvdsdeter...", icon: <WordFile /> },
  { label: "hotelsinn....", icon: <ImageFile /> },
  { label: "imagepare...", icon: <WordFile /> },
  { label: "malemay.jpg", icon: <ImageFile /> },
  { label: "monpet.rtf", icon: <WordFile /> },
  { label: "newsspecifi...", icon: <ImageFile /> },
  { label: "skipriver.jpg", icon: <ImageFile /> },
];

const folders = [
  { name: "Local Disk (C:)", depth: 0, icon: <DriveIcon /> },
  { name: "$WinREAgent", depth: 1, pale: true },
  { name: "PerfLogs", depth: 1 },
  { name: "Program Files", depth: 1 },
  { name: "Program Files (x86)", depth: 1 },
  { name: "ProgramData", depth: 1, pale: true },
  { name: "Users", depth: 1 },
  { name: "admin", depth: 2 },
  { name: ".ms-ad", depth: 3 },
  { name: "3D Objects", depth: 3, icon: <CubeIcon /> },
  { name: "AppData", depth: 3, pale: true },
  { name: "Local", depth: 4 },
  { name: "LocalLow", depth: 4 },
  { name: "Roaming", depth: 4 },
  { name: "Adobe", depth: 5 },
  { name: "Civina Qarko Utils", depth: 5, selected: true },
];

const places = [
  { depth: 1, icon: <PictureIcon /> },
  { depth: 1, icon: <DeviceIcon /> },
  { depth: 1, icon: <MagnifierIcon /> },
  { depth: 1, icon: <FilmIcon /> },
  { depth: 0, icon: <MonitorIcon /> },
  { depth: 1, icon: <CubeIcon /> },
  { depth: 1, icon: <DesktopIcon /> },
  { depth: 1, icon: <DocumentIcon /> },
  { depth: 1, icon: <DownloadIcon /> },
  { depth: 1, icon: <MusicIcon /> },
  { depth: 1, icon: <PictureIcon /> },
  { depth: 1, icon: <FilmIcon /> },
  { depth: 1, icon: <DriveIcon /> },
  { depth: 0, icon: <ExplorerIcon /> },
  { depth: 0, icon: <NetworkIcon /> },
  { depth: 0, icon: <PanelIcon /> },
];

const EXT = "Application exten...";

const files = [
  { name: "concrt140.dll", date: "4/28/2021 6:20 AM", type: EXT, size: "313 KB", clipped: true },
  { name: "DragDropLib.dll", date: "4/4/2025 6:40 PM", type: EXT, size: "45 KB" },
  { name: "Eraser Documentation.pdf", date: "1/4/2018 3:36 AM", type: "Adobe Acrobat D...", size: "593 KB", icon: <PdfIcon /> },
  { name: "Eraser.exe", date: "4/4/2025 6:42 PM", type: "Application", size: "1,051 KB", icon: <EraserIcon /> },
  { name: "Eraser.Manager.dll", date: "4/4/2025 6:40 PM", type: EXT, size: "59 KB" },
  { name: "Eraser.Plugins.dll", date: "4/4/2025 6:40 PM", type: EXT, size: "58 KB" },
  { name: "Eraser.Shell.dll", date: "4/4/2025 6:42 PM", type: EXT, size: "222 KB" },
  { name: "Eraser.Util.dll", date: "4/4/2025 6:40 PM", type: EXT, size: "2,074 KB" },
  { name: "Eraser.Util.Native.dll", date: "4/4/2025 6:42 PM", type: EXT, size: "275 KB" },
  { name: "glib-2.0-0.dll", date: "6/4/2025 10:33 PM", type: EXT, size: "1,287 KB" },
  { name: "gmodule-2.0-0.dll", date: "6/4/2025 10:33 PM", type: EXT, size: "31 KB" },
  { name: "iconv-2.dll", date: "6/4/2025 10:33 PM", type: EXT, size: "1,061 KB" },
  { name: "intl-8.dll", date: "6/4/2025 10:33 PM", type: EXT, size: "107 KB" },
  { name: "k5sprt64.dll", date: "6/4/2025 10:33 PM", type: EXT, size: "69 KB" },
  { name: "kraqci.dat", date: "6/30/2025 4:35 AM", type: "DAT File", size: "876 KB", icon: <BlankIcon />, hover: true },
  { name: "krb5_64.dll", date: "6/4/2025 10:33 PM", type: EXT, size: "1,197 KB" },
  { name: "libffi-8.dll", date: "6/4/2025 10:33 PM", type: EXT, size: "52 KB" },
];

const WindowTop = ({ title, icon, active }) => (
  <>
    <TitleBar>
      <TitleTools $active={active}>
        {icon}
        <ToolSeparator />
        <ToolButton aria-label="Properties" $faded={!active}>
          <CheckPage blue={!active} />
        </ToolButton>
        <ToolButton aria-label="New folder" $faded={!active}>
          <Folder blue={!active} />
        </ToolButton>
        <ToolButton aria-label="Customize toolbar" $width={8}>
          <ToolbarMark />
        </ToolButton>
        <ToolSeparator />
        <WindowTitle $active={active}>{title}</WindowTitle>
      </TitleTools>
      <CaptionButton $active={active} aria-label="Minimize">
        <svg width="10" height="10" viewBox="0 0 10 10">
          <path d="M0 5.500h10" stroke="currentColor" />
        </svg>
      </CaptionButton>
      <CaptionButton $active={active} aria-label="Maximize">
        <svg width="10" height="10" viewBox="0 0 10 10">
          <path d="M.5.5h9v9h-9z" fill="none" stroke="currentColor" />
        </svg>
      </CaptionButton>
      <CaptionButton $active={active} aria-label="Close">
        <svg width="10" height="10" viewBox="0 0 10 10">
          <path d="M0 0l10 10M10 0L0 10" stroke="currentColor" />
        </svg>
      </CaptionButton>
    </TitleBar>
    <TabStrip>
      <Tab $kind="file" $width={56}>
        File
      </Tab>
      <Tab $kind="current" $width={58}>
        Home
      </Tab>
      <Tab $width={58}>Share</Tab>
      <Tab $width={54}>View</Tab>
      <TabExtras>
        <Chevron dir="up" size={11} color="#999" weight={1} />
        <HelpButton>?</HelpButton>
      </TabExtras>
    </TabStrip>
  </>
);

const ExplorerRibbon = () => (
  <Ribbon>
    <RibbonGroup $width={263}>
      <GroupItems $start={4}>
        <BigButton $width={70}>
          <PinIcon />
          <BigLabel>{"Pin to Quick\naccess"}</BigLabel>
        </BigButton>
        <BigButton $width={38} $off>
          <CopyIcon />
          Copy
        </BigButton>
        <BigButton $width={46} $off>
          <PasteIcon />
          Paste
        </BigButton>
        <SmallColumn $top={2} $left={2}>
          <SmallButton $off>
            <CutIcon />
            Cut
          </SmallButton>
          <SmallButton $off>
            <CopyPathIcon />
            Copy path
          </SmallButton>
          <SmallButton $off>
            <PasteLinkIcon />
            Paste shortcut
          </SmallButton>
        </SmallColumn>
      </GroupItems>
      <GroupTitle>Clipboard</GroupTitle>
    </RibbonGroup>
    <RibbonGroup $width={165}>
      <GroupItems $start={9}>
        <SmallColumn $top={10} $gap={13}>
          <SmallButton $off>
            <MoveToIcon />
            Move to
            <DropMark color="#aaa" space={3} />
          </SmallButton>
          <SmallButton $off>
            <CopyToIcon />
            Copy to
            <DropMark color="#aaa" space={3} />
          </SmallButton>
        </SmallColumn>
        <InnerDivider />
        <SmallColumn $top={10} $gap={13}>
          <SmallButton $off $gap={3}>
            <DeleteIcon />
            Delete
            <DropMark space={1} />
          </SmallButton>
          <SmallButton $off $gap={1}>
            <RenameIcon />
            Rename
          </SmallButton>
        </SmallColumn>
      </GroupItems>
      <GroupTitle>Organize</GroupTitle>
    </RibbonGroup>
    <RibbonGroup $width={83}>
      <GroupItems $start={3}>
        <BigButton $width={42}>
          <BigFolder />
          <BigLabel>{"New\nfolder"}</BigLabel>
        </BigButton>
        <SmallColumn $top={2} $left={4}>
          <SmallButton aria-label="New item">
            <NewItemIcon />
            <DropMark />
          </SmallButton>
          <SmallButton aria-label="Easy access">
            <EasyAccessIcon />
            <DropMark />
          </SmallButton>
        </SmallColumn>
      </GroupItems>
      <GroupTitle>New</GroupTitle>
    </RibbonGroup>
    <RibbonGroup $width={134}>
      <GroupItems $start={2}>
        <BigButton $width={60}>
          <PropertiesIcon />
          Properties
          <DropMark />
        </BigButton>
        <SmallColumn $top={2} $left={4}>
          <SmallButton $off>
            <OpenIcon />
            Open
            <DropMark color="#aaa" space={3} />
          </SmallButton>
          <SmallButton $off>
            <EditIcon />
            Edit
          </SmallButton>
          <SmallButton $off>
            <HistoryIcon />
            History
          </SmallButton>
        </SmallColumn>
      </GroupItems>
      <GroupTitle>Open</GroupTitle>
    </RibbonGroup>
    <RibbonGroup $width={114}>
      <GroupItems $start={6}>
        <SmallColumn $top={2}>
          <SmallButton $gap={3}>
            <SelectIcon filled={[0, 1, 2, 3]} />
            Select all
          </SmallButton>
          <SmallButton $gap={3}>
            <SelectIcon filled={[]} />
            Select none
          </SmallButton>
          <SmallButton $gap={3}>
            <SelectIcon filled={[1, 2]} />
            Invert selection
          </SmallButton>
        </SmallColumn>
      </GroupItems>
      <GroupTitle>Select</GroupTitle>
    </RibbonGroup>
  </Ribbon>
);

const ScrollBar = ({ before, thumb, after, across }) => (
  <Scroller $across={across}>
    <ScrollArrow $across={across} aria-label="Scroll back">
      <Chevron dir={across ? "left" : "up"} size={10} weight={1.7} />
    </ScrollArrow>
    <ScrollSpace $share={before} />
    <ScrollThumb $share={thumb} />
    <ScrollSpace $share={after} />
    <ScrollArrow $across={across} aria-label="Scroll forward">
      <Chevron dir={across ? "right" : "down"} size={10} weight={1.7} />
    </ScrollArrow>
  </Scroller>
);

const FileList = () => (
  <FileTable>
    <thead>
      <tr>
        <HeadCell $pad={3}>
          Name
          <SortMark>
            <Chevron dir="up" size={9} weight={1} />
          </SortMark>
        </HeadCell>
        <HeadCell $width={144} $pad={6}>
          Date modified
        </HeadCell>
        <HeadCell $width={120} $pad={6}>
          Type
        </HeadCell>
        <HeadCell $width={72} $pad={6} $last>
          Size
        </HeadCell>
      </tr>
    </thead>
    <tbody>
      {files.map((file) => (
        <FileRow key={file.name} $hover={file.hover}>
          <Cell $main>
            <CellBody $clipped={file.clipped}>
              {file.icon || <DllIcon />}
              {file.name}
            </CellBody>
          </Cell>
          <Cell>
            <CellBody $clipped={file.clipped}>{file.date}</CellBody>
          </Cell>
          <Cell>
            <CellBody $clipped={file.clipped}>{file.type}</CellBody>
          </Cell>
          <Cell>
            <CellBody $right $clipped={file.clipped}>
              {file.size}
            </CellBody>
          </Cell>
        </FileRow>
      ))}
    </tbody>
  </FileTable>
);

const BackWindow = () => (
  <WindowFrame $inset="14px 212px 74px 283px">
    <WindowTop title="File Explorer" icon={<ExplorerIcon />} />
    <Ribbon>
      <RibbonGroup $width={263}>
        <GroupItems $start={4}>
          <BigButton $width={70} $off>
            <PinIcon faded />
            <BigLabel>{"Pin to Quick\naccess"}</BigLabel>
          </BigButton>
        </GroupItems>
      </RibbonGroup>
    </Ribbon>
    <NavRow>
      <NavButton $width={16} aria-label="Back">
        <NavArrow dir="left" color="#ccc" />
      </NavButton>
      <NavButton $width={40} aria-label="Forward">
        <NavArrow dir="right" color="#ddd" />
      </NavButton>
    </NavRow>
    <Panes>
      <Tree>
        {places.map((place, idx) => (
          <TreeItem key={idx} $depth={place.depth} $base={32}>
            {place.icon}
          </TreeItem>
        ))}
      </Tree>
    </Panes>
    <StatusBar>
      <StatusText>5 items</StatusText>
    </StatusBar>
  </WindowFrame>
);

const FrontWindow = () => (
  <WindowFrame $inset="66px 159px 21px 335px" $active>
    <WindowTop title="Civina Qarko Utils" icon={<Folder />} active />
    <ExplorerRibbon />
    <NavRow>
      <NavButton $width={16} aria-label="Back">
        <NavArrow dir="left" color="#555" />
      </NavButton>
      <NavButton $width={40} aria-label="Forward">
        <NavArrow dir="right" color="#d5d5d5" />
      </NavButton>
      <NavButton $width={12} aria-label="Recent locations">
        <Chevron color="#777" />
      </NavButton>
      <NavButton $width={27} aria-label="Up">
        <NavArrow dir="up" color="#555" />
      </NavButton>
      <AddressBox>
        <Folder />
        <CrumbArrow $width={20}>«</CrumbArrow>
        {["admin", "AppData", "Roaming", "Civina Qarko Utils"].map((part) => (
          <Crumb key={part}>
            {part}
            <CrumbArrow>
              <Chevron dir="right" />
            </CrumbArrow>
          </Crumb>
        ))}
        <AddressEnd>
          <NavButton $width={16} aria-label="Previous locations">
            <Chevron size={11} />
          </NavButton>
          <RefreshButton $width={19} aria-label="Refresh">
            <RefreshIcon />
          </RefreshButton>
        </AddressEnd>
      </AddressBox>
      <SearchField>
        <input type="text" placeholder="Search Civina Qarko Utils" />
        <SearchIcon />
      </SearchField>
    </NavRow>
    <Panes>
      <Tree>
        {folders.map((folder) => (
          <TreeItem key={folder.name} $depth={folder.depth} $base={40} $selected={folder.selected}>
            {folder.icon || <Folder pale={folder.pale} />}
            {folder.name}
          </TreeItem>
        ))}
      </Tree>
      <ScrollBar before={111} thumb={52} after={189} />
      <ListPane>
        <ListArea>
          <TableView>
            <FileList />
          </TableView>
          <ScrollBar before={75} thumb={59} after={203} />
        </ListArea>
        <ScrollBar across before={0} thumb={556} after={18} />
      </ListPane>
    </Panes>
    <StatusBar>
      <StatusText>92 items</StatusText>
      <ViewButton $on aria-label="Details">
        <DetailsViewIcon />
      </ViewButton>
      <ViewButton aria-label="Large thumbnails">
        <PictureIcon />
      </ViewButton>
    </StatusBar>
  </WindowFrame>
);

const App = () => {
  return (
    <Screen>
      <GlobalStyle />
      <Desktop>
        <ShortcutGrid>
          {shortcuts.map((item) => (
            <Shortcut key={item.label}>
              <ShortcutIcon>
                {item.icon}
                {item.link && (
                  <ShortcutArrow>
                    <ArrowBadge />
                  </ShortcutArrow>
                )}
              </ShortcutIcon>
              <ShortcutLabel>{item.label}</ShortcutLabel>
            </Shortcut>
          ))}
        </ShortcutGrid>
        <BackWindow />
        <FrontWindow />
        <Watermark>
          <span>ANY</span>
          <PlayMark />
          <span>RUN</span>
        </Watermark>
        <BuildInfo>
          Test Mode
          <br />
          Windows 10 Pro
          <br />
          Build 19041.vb_release.191206-1406
        </BuildInfo>
      </Desktop>
      <Taskbar>
        <TaskButton aria-label="Start">
          <StartIcon />
        </TaskButton>
        <TaskSearch>
          <SearchIcon size={16} color="#222" weight={1} />
          <input type="text" placeholder="Type here to search" />
          <TulipPicture />
        </TaskSearch>
        <TaskButton aria-label="Task view">
          <TaskViewIcon />
        </TaskButton>
        <TaskButton $width={52} aria-label="Microsoft Edge">
          <EdgeIcon size={24} />
        </TaskButton>
        <TaskButton $open aria-label="File Explorer">
          <ExplorerIcon size={22} />
        </TaskButton>
        <TaskButton $width={50} aria-label="Firefox">
          <FirefoxIcon size={24} />
        </TaskButton>
        <Tray>
          <TaskButton $width={24} aria-label="Show hidden icons">
            <Chevron dir="up" size={16} color="#fff" weight={0.6} />
          </TaskButton>
          <TaskButton $width={24} aria-label="Meet now">
            <CameraTrayIcon />
          </TaskButton>
          <TaskButton $width={24} aria-label="Network">
            <WiredTrayIcon />
          </TaskButton>
          <TaskButton $width={24} aria-label="Volume">
            <SoundTrayIcon />
          </TaskButton>
          <Clock>
            8:25 AM
            <br />
            6/30/2025
          </Clock>
          <TaskButton $width={40} aria-label="Notifications">
            <NoteTrayIcon />
          </TaskButton>
          <PeekButton aria-label="Show desktop" />
        </Tray>
      </Taskbar>
    </Screen>
  );
};

export default App;
